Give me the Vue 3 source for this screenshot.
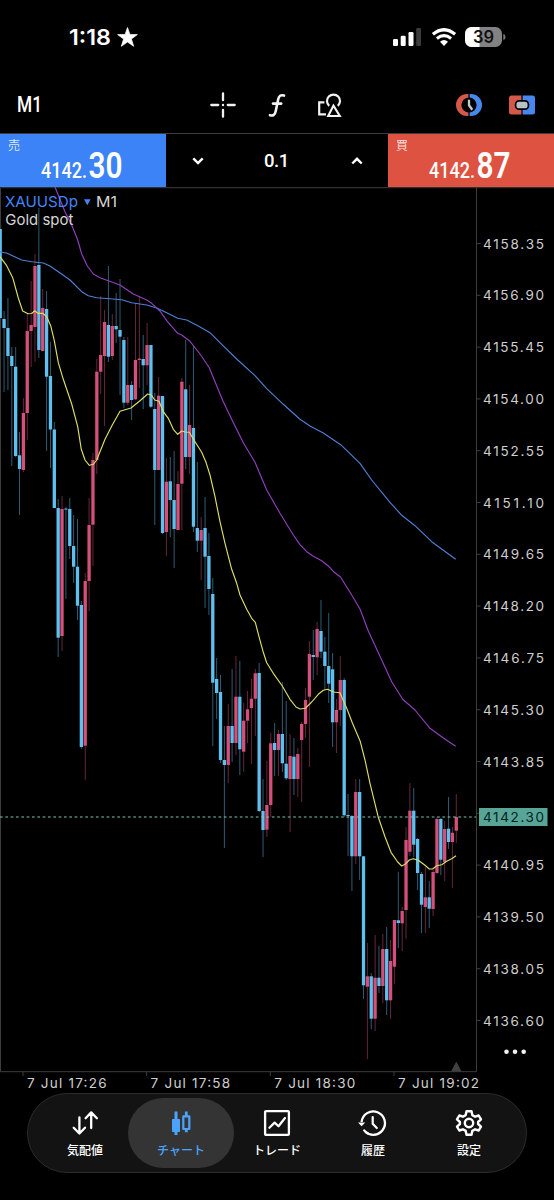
<!-- src/App.vue -->
<template>
  <div class="screen">
    <header class="status">
      <div class="status-left">
        <svg width="43" height="26"><text class="clock" x="0" y="21" textLength="42" lengthAdjust="spacingAndGlyphs">1:18</text></svg>
        <svg class="star" width="21" height="20" viewBox="0 0 21 20">
          <path d="M10.5 0.5 L12.9 7.4 L20.4 7.6 L14.4 12 L16.7 19.3 L10.5 15 L4.3 19.3 L6.6 12 L0.6 7.6 L8.1 7.4 Z" fill="#fff" stroke="#fff" stroke-width=".7" stroke-linejoin="round" />
        </svg>
      </div>
      <div class="status-right">
        <svg width="28" height="18" viewBox="0 0 28 18">
          <rect x="0" y="11" width="5" height="7" rx="1.3" fill="#fff" />
          <rect x="7.7" y="7.8" width="5" height="10.2" rx="1.3" fill="#fff" />
          <rect x="15.5" y="4" width="5" height="14" rx="1.3" fill="#fff" />
          <rect x="23.2" y="0" width="5" height="18" rx="1.3" fill="#3b3b3b" />
        </svg>
        <svg class="wifi" width="26" height="18" viewBox="0 0 26 18">
          <path d="M1.9 6.3 Q13 -2.9 24.1 6.3" fill="none" stroke="#fff" stroke-width="3.3" />
          <path d="M5.9 10.5 Q13 4.9 20.1 10.5" fill="none" stroke="#fff" stroke-width="3.1" />
          <path d="M9 13.8 Q13 10.4 17 13.8 L13 18 Z" fill="#fff" />
        </svg>
        <svg width="41" height="20" viewBox="0 0 41 20">
          <defs>
            <clipPath id="battery"><rect width="37" height="20" rx="6.5" /></clipPath>
          </defs>
          <g clip-path="url(#battery)">
            <rect width="37" height="20" fill="#828282" />
            <rect width="14.5" height="20" fill="#fff" />
          </g>
          <path d="M38.3 6.7 Q40.6 7.5 40.6 10 Q40.6 12.5 38.3 13.3 Z" fill="#777" />
          <text class="battery-text" x="8" y="16" textLength="21" lengthAdjust="spacingAndGlyphs">39</text>
        </svg>
      </div>
    </header>

    <div class="toolbar">
      <svg class="period" width="30" height="30"><text x="0" y="22" textLength="25" lengthAdjust="spacingAndGlyphs">M1</text></svg>
      <div class="tools">
        <svg width="26" height="26" viewBox="0 0 26 26" stroke="#f2f2f2" stroke-width="2.3" stroke-linecap="round">
          <path d="M13 1.3 V8.2 M13 17.8 V24.7 M1.3 13 H8.2 M17.8 13 H24.7" />
          <path d="M13 13 h.01" stroke-width="2.4" />
        </svg>
        <svg width="18" height="26" viewBox="0 0 18 26" fill="none" stroke="#f2f2f2" stroke-width="2.6" stroke-linecap="round">
          <path d="M16 3.6 C12.6 2.5 10.9 4 10.2 7.2 L7.7 19.3 C7 22.6 5.2 24.2 2 23.2" />
          <path d="M5 11.6 H13.2" />
        </svg>
        <svg width="24" height="26" viewBox="0 0 24 26" fill="none" stroke="#f2f2f2" stroke-width="2.2">
          <path d="M6.4 10.3 H1.2 V22.3 H8" />
          <path d="M11.2 13.9 A6.5 6.5 0 1 1 19.8 13.9" />
          <path d="M15.5 13.6 L10.2 24 H21.8 Z" stroke-width="2.1" />
        </svg>
      </div>
      <div class="modes">
        <svg width="26" height="22" viewBox="0 0 26 22">
          <path d="M12.4 0 H11 A11 11 0 0 0 11 22 H12.4 Z" fill="#d6584a" />
          <path d="M13.6 0 H15 A11 11 0 0 1 15 22 H13.6 Z" fill="#4787ee" />
          <circle cx="13" cy="11" r="7.6" fill="#000" />
          <path d="M13 5.7 V11.3 L16.3 15.8" fill="none" stroke="#c3ccc9" stroke-width="2.3" />
        </svg>
        <svg width="26" height="20" viewBox="0 0 26 20">
          <path d="M2.5 .5 H12.4 V19.5 H2.5 Q0 19.5 0 17 V3 Q0 .5 2.5 .5 Z" fill="#d6584a" />
          <path d="M13.6 .5 H23.5 Q26 .5 26 3 V17 Q26 19.5 23.5 19.5 H13.6 Z" fill="#4787ee" />
          <rect x="6.6" y="5.8" width="12.8" height="8.4" rx="3.5" fill="#b9c1c4" stroke="#000" stroke-width="1.7" />
        </svg>
      </div>
    </div>

    <div class="trade">
      <button class="quote sell">
        <span class="side">売</span>
        <svg class="quote-price" width="90" height="52">
          <text class="small-digits" x="0" y="44" textLength="46" lengthAdjust="spacingAndGlyphs">4142.</text>
          <text class="big-digits" x="47.5" y="44" textLength="34" lengthAdjust="spacingAndGlyphs">30</text>
        </svg>
      </button>
      <div class="volume">
        <svg width="12" height="8" viewBox="0 0 12 8"><path d="M1.3 1.3 L6 6 L10.7 1.3" class="chevron" /></svg>
        <span>0.1</span>
        <svg width="12" height="8" viewBox="0 0 12 8"><path d="M1.3 6.5 L6 1.8 L10.7 6.5" class="chevron" /></svg>
      </div>
      <button class="quote buy">
        <span class="side">買</span>
        <svg class="quote-price" width="90" height="52">
          <text class="small-digits" x="0" y="44" textLength="46" lengthAdjust="spacingAndGlyphs">4142.</text>
          <text class="big-digits" x="47.5" y="44" textLength="34" lengthAdjust="spacingAndGlyphs">87</text>
        </svg>
      </button>
    </div>

    <svg class="chart" width="554" height="906" viewBox="0 187 554 906">
      <path d="M0.5 1071.5 V187.7 H554 M476.5 187.7 V1071.7 H0" fill="none" stroke="#3d3d3d" />
      <path d="M456.3 1061.5 L461.6 1071.5 H451 Z" fill="#404040" />

      <g v-for="(c, i) in candles" :key="i" :fill="colors[c[0]]">
        <rect :x="candleX(i) - 0.5" :y="c[1]" width="1" :height="c[2] - c[1]" opacity=".48" />
        <rect :x="candleX(i) - 1.65" :y="c[3]" width="3.3" :height="Math.max(c[4] - c[3], 1)" />
      </g>
      <polyline v-for="line in averages" :key="line.color" :points="line.points" :stroke="line.color" class="average" />
      <line x1="0" x2="476" y1="817" y2="817" stroke="#7ec4b6" stroke-width="1.2" stroke-dasharray="2.7 2.63" />

      <text class="symbol" x="5" y="206.5" textLength="73" lengthAdjust="spacingAndGlyphs">XAUUSDp</text>
      <path d="M84 199.3 H90.6 L87.3 205.3 Z" fill="#4384f7" />
      <text class="caption" x="96" y="206.5" textLength="21" lengthAdjust="spacingAndGlyphs">M1</text>
      <text class="caption" x="5.3" y="225" textLength="68" lengthAdjust="spacingAndGlyphs">Gold spot</text>

      <g v-for="p in prices" :key="p.label">
        <line x1="477" x2="480.5" :y1="p.y" :y2="p.y" stroke="#3d3d3d" />
        <text v-if="!p.hidden" class="axis" x="483" :y="p.y + 5" textLength="61" lengthAdjust="spacing">{{ p.label }}</text>
      </g>
      <rect x="479" y="808" width="68.5" height="18" fill="#56a597" />
      <text class="axis current" x="483" y="822" textLength="61" lengthAdjust="spacing">4142.30</text>
      <circle v-for="x in [506.5, 515, 523.7]" :key="x" :cx="x" cy="1051.7" r="2.3" fill="#f2f2f2" />

      <g v-for="t in times" :key="t.label">
        <line :x1="t.x" :x2="t.x" y1="1072" y2="1076" stroke="#3d3d3d" />
        <text class="axis" :x="t.x + 4" y="1088" :textLength="t.width" lengthAdjust="spacing">{{ t.label }}</text>
      </g>
    </svg>

    <nav class="tabs">
      <a v-for="tab in tabs" :key="tab.id" class="tab" :class="{ active: tab.active }">
        <svg v-if="tab.id === 'quotes'" class="icon" viewBox="0 0 28 28">
          <path d="M8.4 8.5 V24.2 M2.7 18.7 L8.4 24.5 L14 18.7 M20.2 19 V3.6 M14.6 9.2 L20.2 3.4 L25.9 9.2" stroke-width="2.3" />
        </svg>
        <svg v-else-if="tab.id === 'chart'" class="icon" viewBox="0 0 28 28">
          <rect x="5" y="10" width="8" height="13" rx=".8" fill="currentColor" stroke="none" />
          <path d="M9 2.5 V26" stroke-width="3" stroke-linecap="butt" />
          <rect x="16.3" y="7.3" width="6" height="12.7" stroke-width="2.2" />
          <path d="M19.3 2.5 V7 M19.3 20 V23.3" stroke-width="2.8" stroke-linecap="butt" />
        </svg>
        <svg v-else-if="tab.id === 'trade'" class="icon" viewBox="0 0 28 28">
          <rect x="2.1" y="2.1" width="23.8" height="23.8" rx="1" stroke-width="2.3" />
          <path d="M6.4 18.8 L11.6 13.6 L15.5 17.3 L22 9" stroke-width="2.2" />
        </svg>
        <svg v-else-if="tab.id === 'history'" class="icon" viewBox="0 0 28 28">
          <path d="M2.6 13 A11.7 11.7 0 1 1 4.8 21" stroke-width="2.3" stroke-linecap="butt" stroke-dasharray="62 100" />
          <path d="M5.2 21.4 A11.7 11.7 0 0 0 9 24.6" stroke-width="2.3" />
          <path d="M-1 13.4 H6.2 L2.6 17.2 Z" fill="currentColor" stroke="none" />
          <path d="M13.7 8 V14.7 L17.8 19" stroke-width="2.2" />
        </svg>
        <svg v-else class="icon" viewBox="0 0 28 28">
          <path d="M11.5 2.2 H16.5 L17.3 6.1 L20.1 7.7 L23.7 6.5 L26 10.4 L23.1 13 V15 L26 17.6 L23.7 21.5 L20.1 20.3 L17.3 21.9 L16.5 25.8 H11.5 L10.7 21.9 L7.9 20.3 L4.3 21.5 L2 17.6 L4.9 15 V13 L2 10.4 L4.3 6.5 L7.9 7.7 L10.7 6.1 Z" stroke-width="2.4" />
          <circle cx="14" cy="14" r="4.2" stroke-width="2.4" />
        </svg>
        <span>{{ tab.label }}</span>
      </a>
    </nav>
  </div>
</template>

<script setup>
const colors = { u: '#d4507b', d: '#5fc0f0' };

const candleX = (i) => i * 3.865 + 0.2;

// direction, high, low, body top, body bottom
const candles = [
  ['d', 229, 318, 229, 318], ['d', 311, 392, 319, 328], ['d', 298, 390, 328, 356], ['d', 347, 466, 356, 366],
  ['d', 347, 457, 366.7, 456], ['d', 432, 515, 455.3, 469], ['u', 398, 472, 413, 470], ['u', 313, 440, 331, 413],
  ['u', 281, 367, 325, 331], ['u', 254, 362, 266, 327], ['d', 208, 358, 265, 350], ['u', 289, 351, 308, 351],
  ['d', 291, 451, 309, 376.7], ['d', 342, 468, 376, 429.5], ['d', 422, 508, 429.5, 508], ['d', 499, 657, 508, 637.7],
  ['u', 496, 651, 509, 636], ['d', 507, 599, 508.6, 509.4], ['d', 498, 559, 509, 546], ['d', 515, 583, 546, 566.7],
  ['d', 519, 620, 566.7, 605.7], ['d', 601, 749, 605, 747], ['u', 573, 780, 581, 745.7], ['u', 498, 611, 525, 581],
  ['u', 453, 566, 460, 524.7], ['u', 359, 474, 371.7, 460], ['u', 296, 394, 355, 371.7], ['u', 310, 426, 322, 356],
  ['d', 266, 362, 325, 356.7], ['u', 314, 360, 326, 356], ['d', 293, 343, 326, 329.3], ['d', 279, 395, 330, 336.7],
  ['d', 337, 408, 340, 402.7], ['u', 337, 405, 385, 402.7], ['d', 381, 420, 385, 400], ['u', 303, 400, 360, 399.3],
  ['u', 296, 388, 358.6, 360], ['d', 335, 409, 359, 365.3], ['u', 323, 385, 345, 365.3], ['d', 345, 408, 345, 406.7],
  ['d', 393, 525, 409, 470], ['u', 377, 470, 395.7, 470], ['d', 396, 534, 396, 533], ['u', 458, 556, 481.7, 532],
  ['d', 457, 537, 481.3, 500], ['d', 451, 568, 500, 529], ['u', 471, 530, 484, 530], ['u', 378, 530, 381.7, 483.7],
  ['d', 340, 469, 389.3, 457], ['u', 385, 474, 425, 457], ['d', 346, 532, 428, 526.7], ['d', 462, 552, 528, 540.7],
  ['u', 517, 580, 530, 540.7], ['d', 497, 608, 528, 556.7], ['d', 533, 615, 556, 589], ['d', 578, 746, 594, 682.7],
  ['d', 658, 719, 679, 693], ['d', 675, 763, 692, 760], ['d', 726, 848, 760, 765], ['u', 704, 783, 726, 765],
  ['d', 669, 762, 726, 743], ['u', 656, 755, 696.7, 743], ['d', 661, 775, 696.7, 749.3], ['u', 703, 772, 720.7, 751.7],
  ['u', 691, 743, 709.3, 720.7], ['u', 679, 764, 698.7, 708], ['u', 669, 736, 673.3, 698.7], ['d', 663, 812, 673, 811],
  ['d', 779, 857, 811, 830], ['u', 761, 837, 805, 829.7], ['u', 733, 817, 743.3, 805], ['d', 723, 776, 743, 750],
  ['u', 730, 776, 734, 750], ['d', 682, 772, 734, 763.3], ['d', 701, 780, 763.7, 778.3], ['u', 734, 832, 756, 779],
  ['d', 738, 795, 756.7, 779], ['u', 748, 797, 754, 779], ['u', 722, 802, 724, 740], ['u', 688, 738, 700, 724],
  ['u', 641, 767, 654, 696.7], ['d', 630, 680, 655, 657], ['u', 622, 675, 629, 657.3], ['d', 600, 658, 631, 651.7],
  ['d', 637, 690, 651.7, 666], ['d', 613, 703, 666, 683.7], ['d', 653, 747, 669.3, 722.3], ['u', 699, 753, 710, 722.3],
  ['u', 656, 726, 680, 710], ['d', 678, 817, 680, 815.3], ['d', 794, 856, 815, 816], ['d', 815, 891, 816, 856.3],
  ['u', 779, 864, 792, 856.3], ['d', 779, 880, 792, 856.3], ['d', 856, 999, 856.3, 985.3], ['u', 943, 1059, 976.3, 986.7],
  ['d', 973, 1029, 976.3, 1018.7], ['u', 935, 1031, 977.7, 1018.7], ['d', 946, 993, 977.7, 986], ['u', 934, 1003, 949, 986],
  ['d', 927, 1015, 949, 1000.3], ['u', 940, 1019, 961, 1000.3], ['u', 920, 984, 920, 966.7], ['d', 872, 948, 920.3, 923],
  ['u', 907, 951, 911, 923.3], ['u', 827, 939, 840, 910], ['u', 783, 856, 810.7, 851.7], ['d', 788, 857, 810.7, 844.7],
  ['d', 838, 890, 839, 873], ['d', 872, 933, 874, 904.7], ['u', 867, 933, 897.3, 907], ['d', 881, 928, 897.3, 908.7],
  ['u', 870, 916, 872, 909], ['u', 817, 874, 819, 873], ['d', 818, 875, 819, 859.7], ['u', 821, 881, 829, 862],
  ['d', 797, 849, 828.7, 842], ['u', 827, 888, 832.7, 842], ['u', 794, 843, 817, 830.7],
];

const averages = [
  {
    color: '#4f7fd6',
    points: '0,252 6.7,253 13,256 21.7,260 31.7,261.7 43.3,263 50,266 58.3,271.7 70,280 81.7,291.7 88.3,295.7 96.7,297.7 110,298.7 121.7,299.7 131.7,302.7 146.7,305 156.7,308 166.7,312.7 177.7,318.3 186.7,320 198.3,326 210,332.7 221.7,344.3 236.7,359 255,375.7 266.7,388.7 283.3,404.3 300,419.3 310,426 323.3,433 340.7,444.7 360,463.3 371.7,480 390,502.3 401.7,515.3 415,525.7 431.7,541.7 455.7,559.3',
  },
  {
    color: '#8e40bd',
    points: '55,187 65,211.7 71.7,225 77.7,240 81.7,254 87.3,266 93.3,274 100,277.7 120,285 133.3,294 146.7,300 151.7,303.3 160,311 166.7,320.7 177.7,333.3 181.7,335 190,341.3 200,354 209.3,367.7 215,381.7 223.3,401.7 231.7,419.3 243.3,442.7 255,462.3 266.7,490 280,513.3 293.3,535 300,544.7 306.7,551.7 313.3,556.3 321.7,560.7 328.3,566 334.3,572.3 340.7,577.3 351.7,595 360,609 368.3,631 381.7,660 391.7,681.7 402.7,699.3 415,710 430,728.3 443.3,738 455.7,746.3',
  },
  {
    color: '#dedd68',
    points: '0,256.7 6.7,265.7 12.7,277.7 18.3,298 22.7,311 28,313.7 31.7,313.5 34.5,310.8 38,313.3 42.7,313.3 46.7,316.7 50.7,325.7 54.3,340.7 58.3,362.7 63.3,379.3 71.7,404 77.7,426.7 81.3,449.3 85,460 89.3,465.3 93.3,464.3 96.7,460 105,439.3 112.3,425 120,411.3 131,408 140,400.7 147.7,394 151.3,395 154.7,400 159,401.3 163.3,411.7 168.3,418.3 173.3,429.3 177.7,434.3 181.7,431 185,432 189.3,432.3 195,441.7 201.7,452.3 206,462.3 210,475 215,496.7 220,521.7 225,543.3 231.7,569.3 236.7,583.3 240,595 246.7,609.3 251.7,618.3 255.3,622.3 259,636.7 263.3,652.3 266.7,662.7 273.3,673.3 282.3,686 290,699.3 296,707 300,709 305.3,708.3 311.7,702 318.3,694.3 323.3,690.3 327.7,689.3 333.3,692 340,692.7 342.3,698.3 346.7,708.3 352.3,722.7 360,740.7 365,760 370,783.3 378.3,817.3 385,836.7 391,852.3 397.7,862 401.7,866 405,864.3 409.3,860 413.3,858.7 418.3,860.3 425,865.3 429.3,869 432.7,869 436.7,865.7 441.7,864.7 446.7,861.3 451.7,858.7 456,855.7',
  },
];

const prices = Array.from({ length: 16 }, (_, i) => ({
  label: (4158.35 - i * 1.45).toFixed(2),
  y: 243.5 + i * 51.8,
  // the current price tag sits here
  hidden: i === 11,
}));

const times = [
  { label: '7 Jul 17:26', x: 23, width: 79.5 },
  { label: '7 Jul 17:58', x: 146.6, width: 79.5 },
  { label: '7 Jul 18:30', x: 270.3, width: 81 },
  { label: '7 Jul 19:02', x: 394, width: 81 },
];

const tabs = [
  { id: 'quotes', label: '気配値' },
  { id: 'chart', label: 'チャート', active: true },
  { id: 'trade', label: 'トレード' },
  { id: 'history', label: '履歴' },
  { id: 'settings', label: '設定' },
];
</script>

<style>
body {
  background: #000;
}
</style>

<style scoped>
.screen {
  display: flex;
  flex-direction: column;
  width: 554px;
  height: 1200px;
  overflow: hidden;
  background: #000;
  color: #fff;
  font-family: Inter, "Noto Sans CJK JP", sans-serif;
}

svg {
  display: block;
  flex-shrink: 0;
}

.status {
  display: flex;
  align-items: center;
  justify-content: space-between;
  height: 74px;
  padding: 0 48px 0 69px;
  box-sizing: border-box;
}

.status-left,
.status-right {
  display: flex;
  align-items: center;
}

.star {
  margin-left: 5px;
}

.wifi {
  margin: 0 8px 0 10px;
}

.clock {
  fill: #fff;
  font-size: 22px;
  font-weight: 600;
}

.battery-text {
  fill: #111;
  font-size: 17px;
  font-weight: 600;
}

.toolbar {
  display: flex;
  align-items: center;
  height: 59px;
  padding: 2px 19px 0 17px;
  box-sizing: border-box;
}

.period {
  fill: #fff;
  font-family: Roboto, sans-serif;
  font-size: 22px;
  font-weight: 500;
}

.tools {
  display: flex;
  align-items: center;
  gap: 32px;
  margin-left: 163px;
}

.modes {
  display: flex;
  align-items: center;
  gap: 27px;
  margin-left: auto;
}

.trade {
  display: flex;
  height: 54px;
  border-top: 1px solid #3d3d3d;
  box-sizing: border-box;
}

.quote {
  display: flex;
  width: 166px;
  padding: 0 0 0 8px;
  border: none;
  color: #fff;
  font-family: inherit;
}

.sell {
  background: #3b83f6;
}

.buy {
  background: #dd5240;
}

.side {
  width: 12px;
  margin-top: 5px;
  color: rgba(255, 255, 255, 0.85);
  font-size: 12px;
  line-height: 14px;
}

.quote-price {
  margin-left: 21px;
  fill: #fff;
  font-family: Roboto, sans-serif;
}

.small-digits {
  font-size: 21.5px;
  font-weight: 500;
}

.big-digits {
  font-size: 36px;
  font-weight: 600;
}

.volume {
  display: flex;
  flex: 1;
  align-items: center;
  justify-content: space-between;
  padding: 0 25px 0 26px;
  font-family: Roboto, sans-serif;
  font-size: 18.5px;
  font-weight: 500;
}

.volume span {
  margin-left: -2px;
  letter-spacing: -0.4px;
}

.chevron {
  fill: none;
  stroke: #fff;
  stroke-width: 2.4;
}

.average {
  fill: none;
  stroke-width: 1.15;
  stroke-linejoin: round;
}

.symbol {
  fill: #4384f7;
  font-size: 15px;
}

.caption {
  fill: #d6d6d6;
  font-size: 15px;
}

.axis {
  fill: #cfcfcf;
  font-size: 13.5px;
}

.current {
  fill: #07211d;
}

.tabs {
  display: flex;
  align-items: center;
  justify-content: center;
  width: 500px;
  height: 80px;
  margin-left: 27px;
  border: 1px solid #2b2b2b;
  border-radius: 40px;
  box-sizing: border-box;
  background: #131313;
}

.tab {
  display: flex;
  flex-direction: column;
  align-items: center;
  width: 106px;
  height: 70px;
  margin: 0 -5px;
  padding-top: 11px;
  border-radius: 35px;
  box-sizing: border-box;
  color: #fff;
  font-size: 12px;
  font-weight: 500;
  line-height: 16px;
  white-space: nowrap;
}

.tab.active {
  background: #343434;
  color: #4ba3fb;
}

.tab span {
  margin-top: 6px;
}

.icon {
  width: 28px;
  height: 28px;
  overflow: visible;
  fill: none;
  stroke: currentColor;
  stroke-linecap: round;
  stroke-linejoin: round;
}
</style>
